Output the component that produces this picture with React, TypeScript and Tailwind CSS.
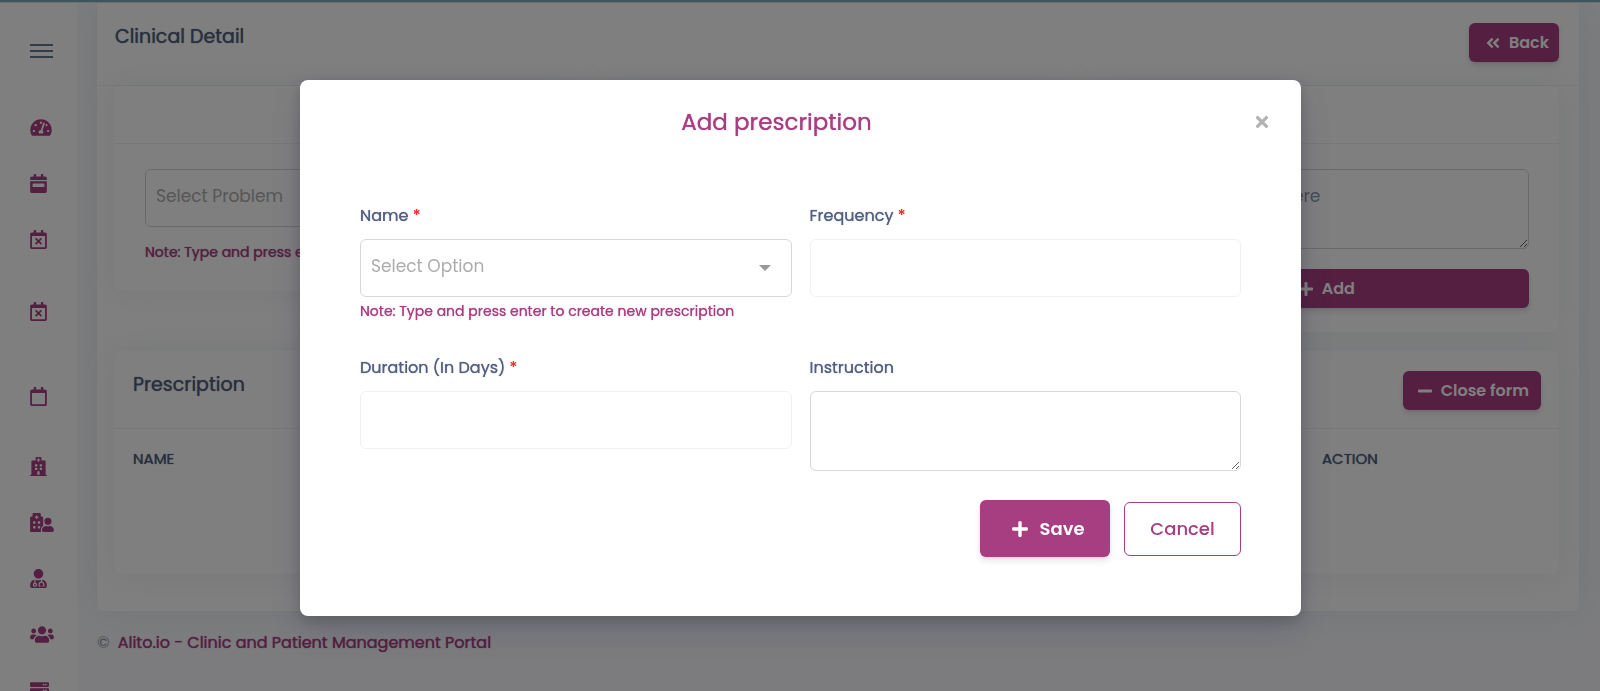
import { useState } from "react";
import type { ReactNode } from "react";
import {
  FaAngleDoubleLeft,
  FaCalendarWeek,
  FaHospital,
  FaHospitalUser,
  FaMinus,
  FaPlus,
  FaRegCalendar,
  FaRegCalendarTimes,
  FaServer,
  FaTachometerAlt,
  FaTimes,
  FaUserMd,
  FaUsers,
} from "react-icons/fa";

const navItems = [
  { label: "Dashboard", icon: FaTachometerAlt, height: "h-14", width: "w-[22px]" },
  { label: "Appointments", icon: FaCalendarWeek, height: "h-14", width: "w-[17px]" },
  { label: "Encounters", icon: FaRegCalendarTimes, height: "h-14", width: "w-[17px]" },
  { label: "Encounter Templates", icon: FaRegCalendarTimes, height: "h-[88px]", width: "w-[17px]" },
  { label: "Calendar", icon: FaRegCalendar, height: "h-[83px]", width: "w-[17px]" },
  { label: "Clinic", icon: FaHospital, height: "h-14", width: "w-[17px]" },
  { label: "Patients", icon: FaHospitalUser, height: "h-14", width: "w-6" },
  { label: "Doctors", icon: FaUserMd, height: "h-14", width: "w-[17px]" },
  { label: "Receptionists", icon: FaUsers, height: "h-14", width: "w-6" },
  { label: "Services", icon: FaServer, height: "h-14", width: "w-[19px]" },
];

const strong = "font-normal [text-shadow:0_0_1px_currentColor]";
const primaryButton =
  "flex items-center justify-center rounded-md bg-[#a83e82] font-semibold text-white shadow-[0_4px_6px_rgba(50,50,93,0.11),0_1px_3px_rgba(0,0,0,0.08)]";
const cardShadow = "shadow-[0_0_32px_rgba(136,152,170,0.15)]";
const fieldLine = "w-full rounded-md border bg-white px-[10px] text-[17px] outline-none";

function Sidebar() {
  return (
    <nav aria-label="Main" className="w-[77px] shrink-0 bg-white pl-[30px]">
      <button type="button" aria-label="Toggle menu" className="flex h-24 flex-col justify-center gap-1">
        <span className="h-[2px] w-[23px] bg-[#67798f]" />
        <span className="h-[2px] w-[23px] bg-[#67798f]" />
        <span className="h-[2px] w-[23px] bg-[#67798f]" />
      </button>
      <ul>
        {navItems.map(({ label, icon: Icon, height, width }) => (
          <li key={label} className={height}>
            <a href="#" aria-label={label} className="flex h-full items-center text-[#a83e82]">
              <Icon className={`h-[19px] ${width}`} />
            </a>
          </li>
        ))}
      </ul>
    </nav>
  );
}

function Panel({ children }: { children: ReactNode }) {
  return (
    <section className={`rounded-b-md bg-white ${cardShadow}`}>
      <div className="h-[58px] border-b border-[#eff1f4]" />
      <div className="px-[30px] pt-[25px]">{children}</div>
    </section>
  );
}

function ClinicalDetail() {
  return (
    <section className={`rounded-b-md bg-white pb-[37px] ${cardShadow}`}>
      <header className="flex h-[83px] items-start justify-between border-b border-[#eff1f4] pt-5 pr-5 pl-[18px]">
        <h1 className={`text-[19px] leading-7 ${strong}`}>Clinical Detail</h1>
        <button type="button" className={`${primaryButton} h-[39px] gap-2 pr-[10px] pl-4 text-base`}>
          <FaAngleDoubleLeft className="size-4" />
          Back
        </button>
      </header>

      <div className="pr-5 pl-[18px]">
        <div className="grid grid-cols-3 items-start gap-[18px]">
          <Panel>
            <input
              aria-label="Problem"
              placeholder="Select Problem"
              className={`${fieldLine} h-[58px] border-[#ced4da] pb-1 placeholder:text-[#adadad]`}
            />
            <p className={`pt-[11px] pb-[25px] text-sm leading-7 text-[#a83e82] ${strong}`}>
              Note: Type and press enter to create new problem
            </p>
          </Panel>
          <Panel>
            <input
              aria-label="Observation"
              placeholder="Select Observation"
              className={`${fieldLine} h-[58px] border-[#ced4da] pb-1 placeholder:text-[#adadad]`}
            />
            <p className={`pt-[11px] pb-[25px] text-sm leading-7 text-[#a83e82] ${strong}`}>
              Note: Type and press enter to create
            </p>
          </Panel>
          <Panel>
            <textarea
              aria-label="Note"
              placeholder="Enter some notes here"
              className={`${fieldLine} block h-20 border-[#ced4da] py-[14px] placeholder:text-[#8898aa]`}
            />
            <div className="pt-5 pb-6">
              <button type="button" className={`${primaryButton} h-[39px] w-full gap-2 pl-1 text-base`}>
                <FaPlus className="size-4" />
                Add
              </button>
            </div>
          </Panel>
        </div>

        <section className={`mt-[19px] rounded-md bg-white ${cardShadow}`}>
          <header className="flex h-[78px] items-start justify-between border-b border-[#eff1f4] px-[18px] pt-5">
            <h2 className={`text-[19px] leading-7 ${strong}`}>Prescription</h2>
            <button type="button" className={`${primaryButton} h-[39px] gap-2 pr-3 pl-[14px] text-base`}>
              <FaMinus className="size-4" />
              Close form
            </button>
          </header>
          <div className="h-[145px] px-[18px] pt-[18px]">
            <table className="w-full table-fixed text-left text-[15px] leading-6 uppercase">
              <thead>
                <tr>
                  <th className={`w-[28%] ${strong}`}>Name</th>
                  <th className={`w-[28%] ${strong}`}>Frequency</th>
                  <th className={strong}>Duration</th>
                  <th className={`w-[219px] ${strong}`}>Action</th>
                </tr>
              </thead>
            </table>
          </div>
        </section>
      </div>
    </section>
  );
}

function Label({ htmlFor, required, children }: { htmlFor: string; required?: boolean; children: ReactNode }) {
  return (
    <label htmlFor={htmlFor} className={`block pb-[11px] text-base leading-6 ${strong}`}>
      {children}
      {required && <span className="text-[#f12b2b] [text-shadow:0_0_1px_currentColor]"> *</span>}
    </label>
  );
}

function PrescriptionDialog({ onClose }: { onClose: () => void }) {
  return (
    <div className="fixed inset-0 overflow-hidden bg-black/50 pt-20 pl-px">
      <div
        role="dialog"
        aria-modal="true"
        aria-labelledby="dialog-title"
        className="mx-auto w-full max-w-[1001px] rounded-lg bg-white shadow-[0_15px_35px_rgba(50,50,93,0.2),0_5px_15px_rgba(0,0,0,0.17)]"
      >
        <header className="flex items-center pt-6 pr-[30px]">
          <h2 id="dialog-title" className={`flex-1 text-center text-[23px] leading-9 text-[#a83e82] ${strong}`}>
            Add prescription
          </h2>
          <button type="button" aria-label="Close" onClick={onClose} className="text-[#b3b3b3]">
            <FaTimes className="size-[18px]" />
          </button>
        </header>
        <form className="px-[60px] pt-16 pb-[59px]" onSubmit={(e) => e.preventDefault()}>
          <div className="grid grid-cols-2 gap-x-[18px]">
            <div className="h-[152px]">
              <Label htmlFor="name" required>
                Name
              </Label>
              <div className="relative">
                <input
                  id="name"
                  placeholder="Select Option"
                  className={`${fieldLine} h-[58px] border-[#d5d8dc] pb-1 placeholder:text-[#adadad]`}
                />
                <span className="pointer-events-none absolute top-[26px] right-[21px] border-x-[6px] border-t-[6px] border-x-transparent border-t-[#999999]" />
              </div>
              <p className={`pt-[2px] text-sm leading-6 text-[#a83e82] ${strong}`}>
                Note: Type and press enter to create new prescription
              </p>
            </div>
            <div>
              <Label htmlFor="frequency" required>
                Frequency
              </Label>
              <input id="frequency" className={`${fieldLine} h-[58px] border-[#f0f1f3]`} />
            </div>
            <div>
              <Label htmlFor="duration" required>
                Duration (In Days)
              </Label>
              <input id="duration" className={`${fieldLine} h-[58px] border-[#f0f1f3]`} />
            </div>
            <div>
              <Label htmlFor="instruction">Instruction</Label>
              <textarea id="instruction" className={`${fieldLine} block h-20 border-[#d5d8dc] py-[14px]`} />
            </div>
          </div>
          <div className="flex items-center justify-end gap-[14px] pt-[29px]">
            <button type="submit" className={`${primaryButton} h-[57px] w-[130px] gap-[10px] pl-[6px] text-lg`}>
              <FaPlus className="size-[18px]" />
              Save
            </button>
            <button
              type="button"
              onClick={onClose}
              className="h-[54px] w-[117px] rounded-md border border-[#a83e82] text-lg font-medium text-[#a83e82]"
            >
              Cancel
            </button>
          </div>
        </form>
      </div>
    </div>
  );
}

export default function App() {
  const [open, setOpen] = useState(true);

  return (
    <div className="flex h-screen flex-col overflow-hidden bg-[#f8f9fc] font-[Poppins,Inter,'Noto_Sans',sans-serif] text-[#525f7f]">
      <div className="h-[3px] shrink-0 border-b border-[#d0e6f2] bg-[#7fabbd]" />
      <div className="flex min-h-0 flex-1">
        <Sidebar />
        <main className="min-w-0 flex-1 pr-[21px] pl-5">
          <ClinicalDetail />
          <footer className="flex items-center gap-2 pt-5 text-base leading-6">
            <span className="text-[#8898aa]">©</span>
            <a href="#" className={`text-[#a83e82] ${strong}`}>
              Alito.io - Clinic and Patient Management Portal
            </a>
          </footer>
        </main>
      </div>
      {open && <PrescriptionDialog onClose={() => setOpen(false)} />}
    </div>
  );
}
